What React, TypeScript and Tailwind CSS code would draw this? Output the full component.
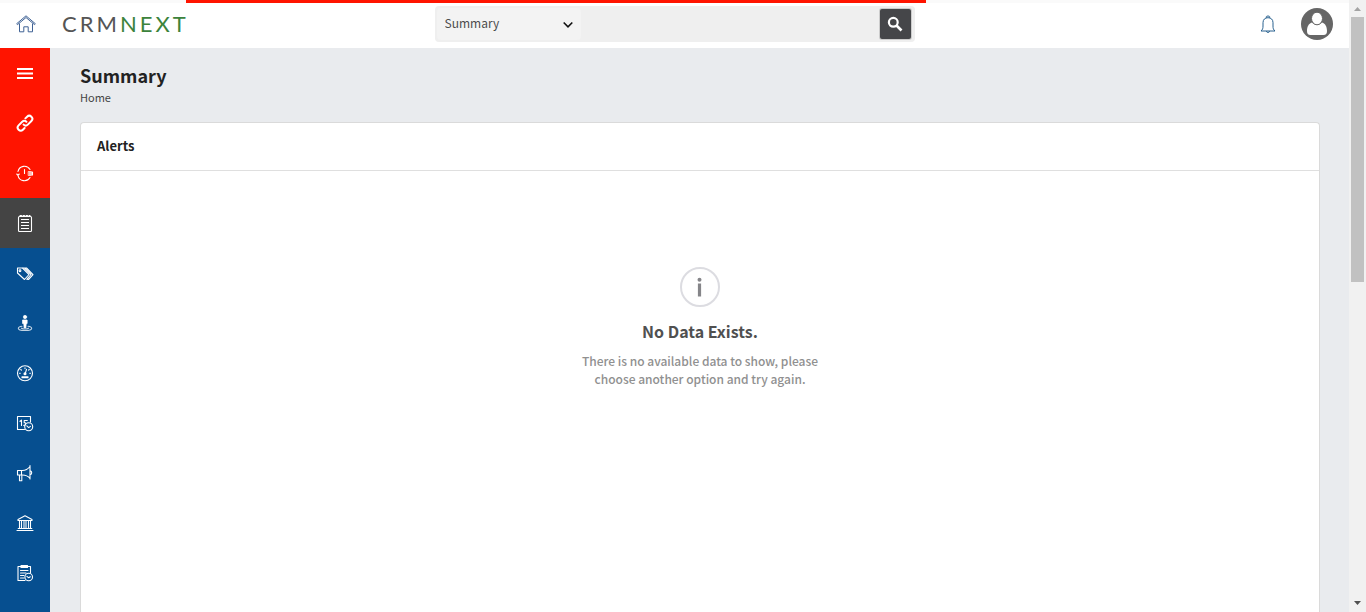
import type { ReactNode } from 'react';

type IconProps = { children: ReactNode; size?: number; width?: number };

function Icon({ children, size = 18, width = 1.1 }: IconProps) {
  return (
    <svg
      width={size}
      height={size}
      viewBox="0 0 18 18"
      fill="none"
      stroke="currentColor"
      strokeWidth={width}
      strokeLinecap="round"
      strokeLinejoin="round"
      aria-hidden="true"
    >
      {children}
    </svg>
  );
}

const menu = [
  {
    label: 'Menu',
    tone: 'bg-[#ff1400]',
    icon: (
      <Icon>
        <path d="M1 5h16M1 9.500h16M1 14h16" strokeWidth="2.200" strokeLinecap="butt" />
      </Icon>
    ),
  },
  {
    label: 'Quick links',
    tone: 'bg-[#ff1400]',
    icon: (
      <Icon width={2}>
        <path d="M7.600 10.600a3 3 0 0 0 4.200 0l3.600-3.600a3 3 0 0 0-4.300-4.300L9.400 4.400" />
        <path d="M10.400 7.800a3 3 0 0 0-4.200 0L2.600 11.400a3 3 0 0 0 4.300 4.300L8.600 14" />
      </Icon>
    ),
  },
  {
    label: 'Recent',
    tone: 'bg-[#ff1400]',
    icon: (
      <Icon>
        <path d="M2 7.500A6.500 6.500 0 0 1 14 5.500M14 13.500A6.500 6.500 0 0 1 2 11.500M8.500 5.500v4" />
        <path d="M.7 10 2 11.200l1.300-1.200" />
        <path d="M12.500 7.500h3v4h-3z" fill="currentColor" fillOpacity=".7" strokeWidth=".6" />
        <path d="M16.500 8v3" />
      </Icon>
    ),
  },
  {
    label: 'Summary',
    tone: 'bg-[#444444]',
    icon: (
      <Icon>
        <rect x="2.500" y="2.500" width="13" height="15" rx="1" />
        <path d="M4 1.500h10" strokeDasharray="1.500 1.500" />
        <path d="M5 5.500h8M5 8.500h8M5 11.500h8M5 14.500h8" strokeLinecap="butt" />
      </Icon>
    ),
  },
  {
    label: 'Offers',
    tone: 'bg-[#064f90]',
    icon: (
      <Icon>
        <path d="M1.500 4h5l6.500 6.500-4.500 5-7-6.500z" />
        <path d="M8.500 4h2l6.500 6.700-4.500 4.800-1.800-.3M7 4h1.500l6.500 6.500-4 4.600" />
        <circle cx="4" cy="6.700" r=".9" />
      </Icon>
    ),
  },
  {
    label: 'Leads',
    tone: 'bg-[#064f90]',
    icon: (
      <Icon>
        <circle cx="9" cy="3" r="1.700" fill="currentColor" strokeWidth=".6" />
        <path d="M6.900 6h4.200v3.500h-.9l-.4 4.500H8.200l-.4-4.500h-.9z" fill="currentColor" strokeWidth=".8" />
        <path d="M6 12.200c-2.300.3-3.700 1-3.700 2 0 1.400 3 2.300 6.700 2.300s6.700-.9 6.700-2.300c0-1-1.400-1.700-3.700-2" strokeOpacity=".75" />
        <path d="M5.500 14.200c1.500 1 5.500 1 7 0" strokeOpacity=".75" />
      </Icon>
    ),
  },
  {
    label: 'Dashboard',
    tone: 'bg-[#064f90]',
    icon: (
      <Icon>
        <circle cx="9" cy="9.300" r="7.500" />
        <path d="M9 10.300l1.500-5M9 3.800v.8M4.800 5.500l.6.600M3.500 9.300h.8M13.700 9.300h.8M13.200 5.500l-.6.600M6 12.800h6v1H6z" />
        <circle cx="9" cy="9.800" r="1" fill="currentColor" />
      </Icon>
    ),
  },
  {
    label: 'Calendar',
    tone: 'bg-[#064f90]',
    icon: (
      <Icon>
        <path d="M8.500 15.500h-7v-13h13V8M4 7.300l1.500-1.100v5.300M11.300 6.500H8.200v2.200c2.300-.5 2.100 3-.6 2.600" />
        <circle cx="12.700" cy="12.700" r="4" />
        <path d="M10.800 11.900l1.900 1.700 1.700-1.200" />
      </Icon>
    ),
  },
  {
    label: 'Campaigns',
    tone: 'bg-[#064f90]',
    icon: (
      <Icon>
        <path d="M1.500 6.500h5c3 0 5.500-1.500 7.500-4v12c-2-2.500-4.500-3.500-7.500-3.500h-5zM5.500 6.500V11M3.500 11v5.700h2.300V11M14 6.700c2.300.5 2.300 3.500 0 4M14 1.500v13.500" />
      </Icon>
    ),
  },
  {
    label: 'Accounts',
    tone: 'bg-[#064f90]',
    icon: (
      <Icon>
        <path d="M2 5.500 9 1.700l7 3.800v1H2zM3.500 7v7M5.500 7v7M8 7v7M10 7v7M12.500 7v7M14.500 7v7M2.200 14.500h13.600M1 16.500h16" />
      </Icon>
    ),
  },
  {
    label: 'Tasks',
    tone: 'bg-[#064f90]',
    icon: (
      <Icon>
        <path d="M9 16.500H2v-14h12.500V8.500M5 1.500h6.500v2H5zM4.500 6.500H12M4.500 9H10M4.500 11.500H8M4.500 14H8" />
        <circle cx="12.700" cy="13" r="3.800" />
        <path d="M10.900 12.300l1.800 1.500 1.600-1" />
      </Icon>
    ),
  },
];

function Header() {
  return (
    <header className="relative grid h-12 shrink-0 grid-cols-[1fr_480px_1fr] items-center bg-white">
      <div className="absolute inset-x-0 top-0 h-[3px] bg-[#fafafa]">
        <div className="ml-[13.8%] h-full w-[54.85%] bg-[#ff1400]" />
      </div>
      <div className="flex items-center">
        <a href="#home" aria-label="Home" className="flex w-[52px] justify-center text-[#3f6295]">
          <svg width="20" height="18" viewBox="0 0 20 18" fill="none" stroke="currentColor" strokeWidth="1" strokeLinejoin="round" aria-hidden="true">
            <path d="M.7 8.700 10 .8l9.300 7.900-.8.900L10 2.500 1.500 9.600z" />
            <path d="M3.500 8.500v8.300h4.300v-5h4.400v5h4.300V8.500" />
          </svg>
        </a>
        <a href="#crmnext" className="ml-2.5 font-[Lato,sans-serif] text-[22px] leading-6 tracking-[3px] text-[#555555]">
          CRM<span className="text-[#3c833c]">NEXT</span>
        </a>
      </div>
      <form role="search" className="flex h-9 items-center rounded bg-[#efefef] px-0.5" onSubmit={(e) => e.preventDefault()}>
        <div className="relative">
          <select aria-label="Search in" className="h-8 w-36 appearance-none rounded-sm bg-[#f3f3f3] pb-0.5 pl-2 text-xs text-[#4c4c4c]">
            <option>Summary</option>
          </select>
          <svg className="pointer-events-none absolute right-2 top-3" width="10" height="10" viewBox="0 0 10 10" fill="none" stroke="#111111" strokeWidth="1.600" aria-hidden="true">
            <path d="M.7 2.500 5 6.800l4.300-4.300" />
          </svg>
        </div>
        <input type="text" aria-label="Search text" className="h-8 min-w-0 flex-1 bg-transparent px-2 text-xs outline-none" />
        <button type="submit" aria-label="Search" className="mr-0.5 flex h-[30px] w-[31px] items-center justify-center rounded-xs bg-[#454649] text-white shadow-[0_0_0_1px_#cccccc]">
          <svg width="16" height="16" viewBox="0 0 16 16" fill="none" stroke="currentColor" aria-hidden="true">
            <circle cx="6.300" cy="6.300" r="4.400" strokeWidth="2.200" />
            <path d="M9.500 9.500l5 5" strokeWidth="2.600" />
          </svg>
        </button>
      </form>
      <div className="flex items-center justify-end gap-6 pr-4">
        <button type="button" aria-label="Notifications" className="text-[#28618f]">
          <svg width="18" height="18" viewBox="0 0 18 18" fill="none" stroke="currentColor" strokeWidth="1" strokeLinejoin="round" aria-hidden="true">
            <path d="M7.300 2.800V1.700c0-.9 3.400-.9 3.400 0v1.100M2 16c1.700-1.400 2-2.700 2-5V7.700C4 4.500 6 2.700 9 2.700s5 1.800 5 5V11c0 2.300.3 3.600 2 5zM7.300 16.200c.2 1.600 3.200 1.600 3.400 0" />
          </svg>
        </button>
        <button type="button" aria-label="Profile" className="size-8">
          <svg width="32" height="32" viewBox="0 0 32 32" aria-hidden="true">
            <circle cx="16" cy="16" r="16" fill="#666666" />
            <path d="M11 14.500c-3.500 1-5 4.500-5 8.500 0 2.500 1 4 3.500 4h13c2.500 0 3.500-1.500 3.500-4 0-4-1.500-7.500-5-8.500-1.200 1.600-3 2.500-5 2.500s-3.800-.9-5-2.500z" fill="white" />
            <ellipse cx="16" cy="10.500" rx="5.500" ry="6.300" fill="white" stroke="#666666" strokeWidth="1" />
          </svg>
        </button>
      </div>
    </header>
  );
}

function Sidebar() {
  return (
    <nav aria-label="Main" className="w-[50px] shrink-0 overflow-hidden bg-[#064f90]">
      {menu.map((item) => (
        <a key={item.label} href="#section" aria-label={item.label} className={`flex h-[50px] items-center justify-center text-white ${item.tone}`}>
          {item.icon}
        </a>
      ))}
    </nav>
  );
}

function EmptyState() {
  return (
    <div className="flex flex-col items-center pt-24 text-center">
      <svg width="40" height="40" viewBox="0 0 40 40" aria-hidden="true">
        <circle cx="20" cy="20" r="19" fill="none" stroke="#dcdce1" strokeWidth="2" />
        <circle cx="19.500" cy="12.800" r="2" fill="#858589" />
        <path d="M19.500 16.500v13" stroke="#858589" strokeWidth="3.200" />
      </svg>
      <h3 className="mt-3 text-base leading-6 font-bold text-[#505050]">No Data Exists.</h3>
      <p className="mt-[9px] w-64 text-xs leading-[18px] font-medium text-[#909090]">
        There is no available data to show, please choose another option and try again.
      </p>
    </div>
  );
}

function ScrollTrack() {
  return (
    <div aria-hidden="true" className="flex w-[17px] shrink-0 flex-col items-center bg-[#f1f1f1]">
      <svg width="17" height="17" viewBox="0 0 17 17">
        <path d="M5 11 8.500 7l3.500 4z" fill="#a3a3a3" />
      </svg>
      <div className="h-[43.3%] w-[13px] bg-[#c1c1c1]" />
      <svg className="mt-auto" width="17" height="17" viewBox="0 0 17 17">
        <path d="M5 6h7l-3.500 4z" fill="#505050" />
      </svg>
    </div>
  );
}

export default function App() {
  return (
    <div className="flex h-screen overflow-hidden font-['Noto_Sans_CJK_SC',sans-serif]">
      <div className="flex min-w-0 flex-1 flex-col">
        <Header />
        <div className="flex min-h-0 flex-1">
          <Sidebar />
          <main className="flex min-w-0 flex-1 flex-col bg-[#e9ebee] pt-[15px] pr-[29px] pl-[30px]">
            <h1 className="text-lg leading-6 font-bold text-[#222222]">Summary</h1>
            <a href="#home" className="self-start text-[11px] leading-5 text-[#444444]">Home</a>
            <section className="mt-[15px] flex-1 rounded-t border border-b-0 border-[#dadada] bg-white">
              <h2 className="flex h-12 items-center border-b border-[#dfdfdf] px-4 pb-0.5 text-[13px] font-bold text-[#222222]">Alerts</h2>
              <EmptyState />
            </section>
          </main>
        </div>
      </div>
      <ScrollTrack />
    </div>
  );
}
